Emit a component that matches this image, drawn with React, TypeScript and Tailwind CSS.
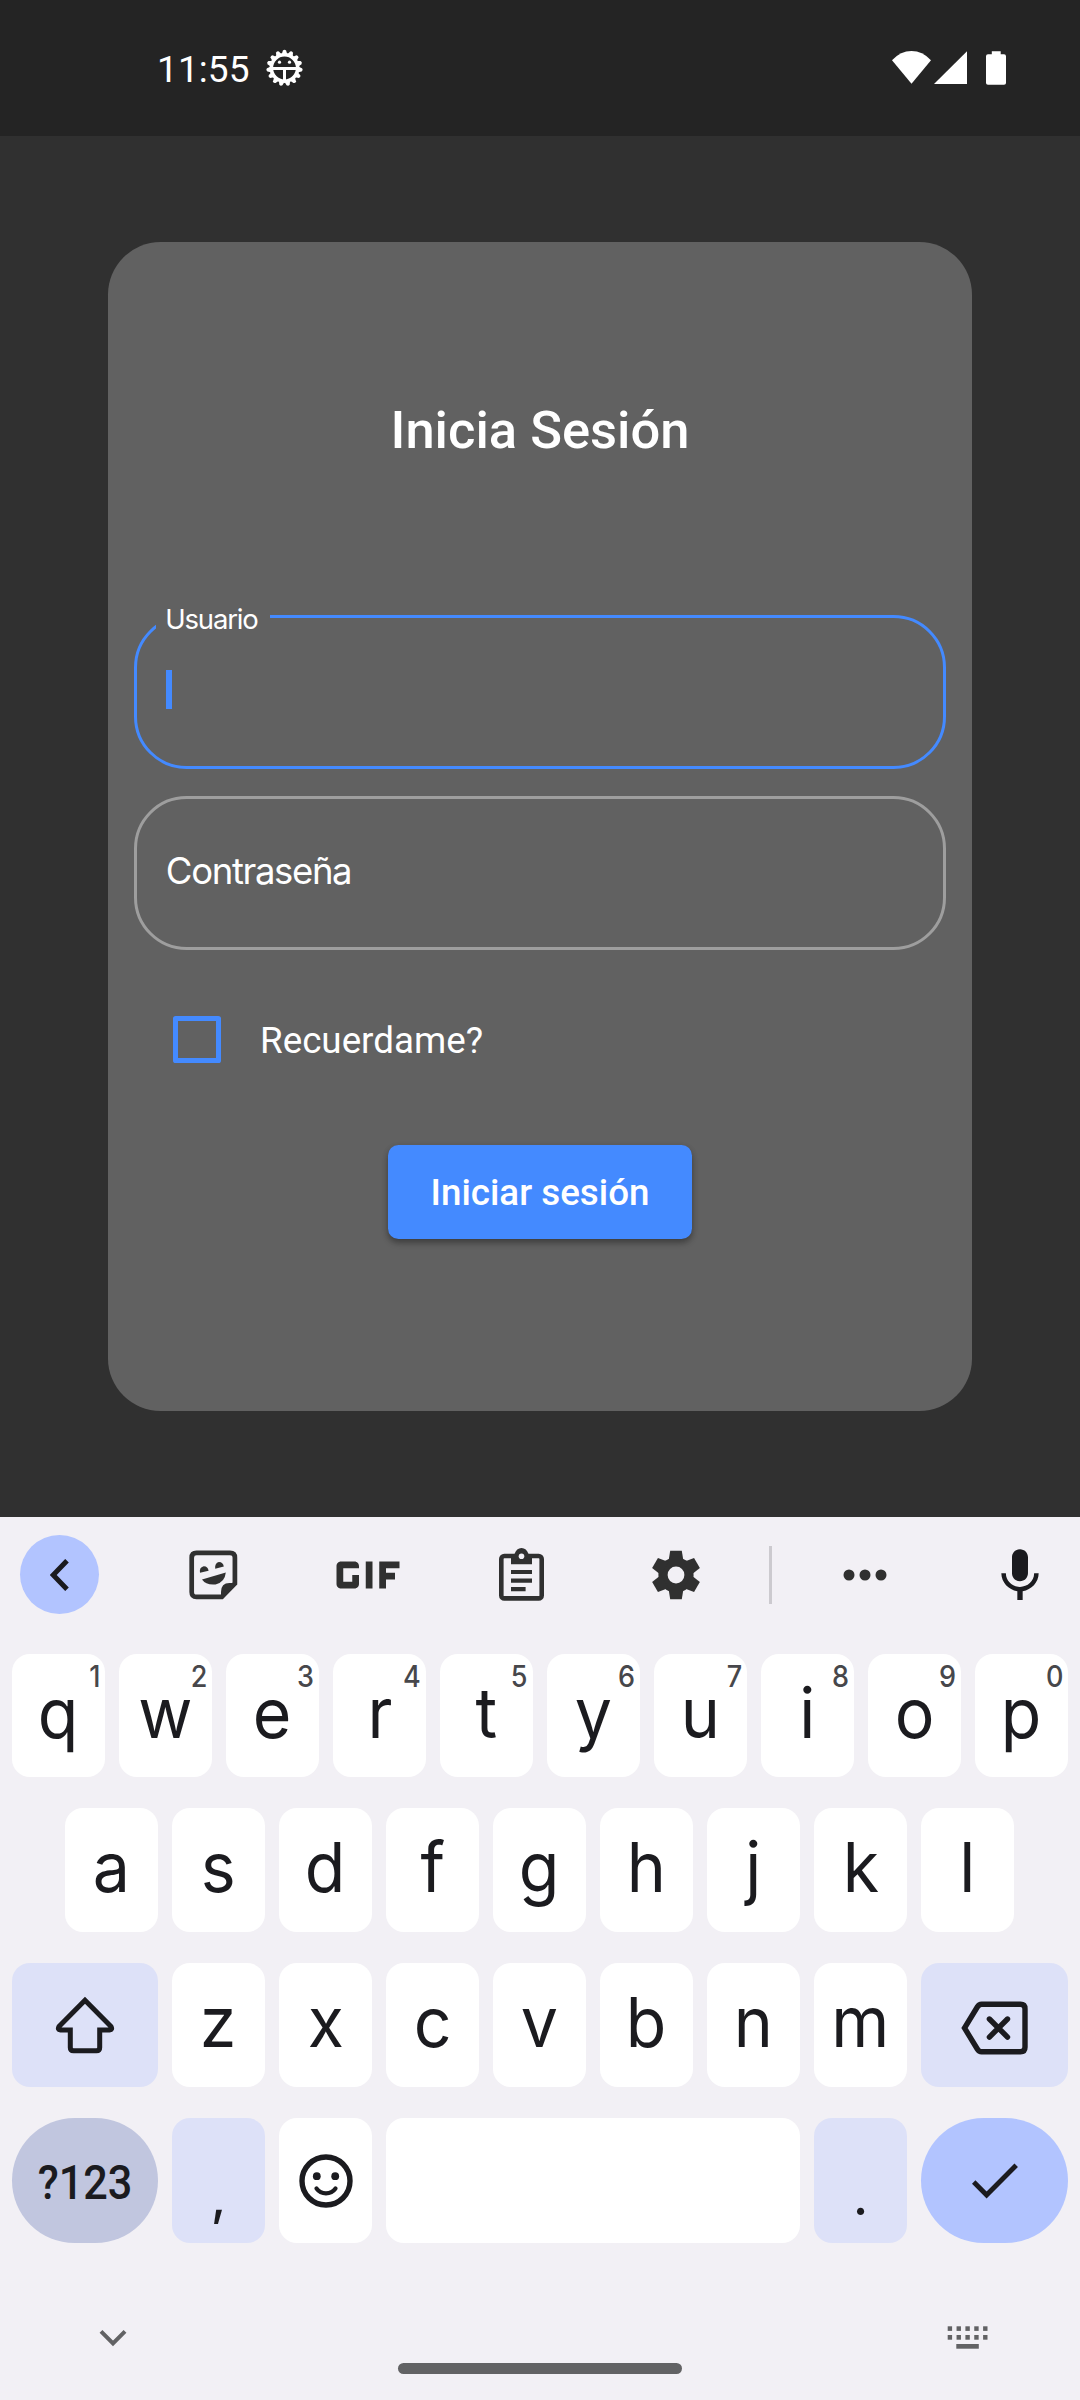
import type { ReactNode } from "react";
import { MdGif, MdMic } from "react-icons/md";

const INK = "#1b1b1f";
const TOOL = "#303030";

function StatusBar() {
  return (
    <header className="flex h-[136px] shrink-0 items-start bg-[#242424] text-white">
      <div className="mt-[46.5px] ml-[157px] w-[109px] text-[37px] leading-[46px] tracking-[0.1px]">11:55</div>
      <svg className="mt-[48.5px]" width="37" height="38" viewBox="-18.5 -19 37 38" fill="none">
        <circle r="13.2" stroke="#fff" strokeWidth="3.6" />
        {Array.from({ length: 15 }, (_, i) => (
          <path key={i} d="M-2.7 14L-1.6 17.4Q0 19 1.6 17.4L2.7 14Z" fill="#fff" transform={`rotate(${i * 24 + 12})`} />
        ))}
        <path d="M-13 0.5H13M0 0.5V13.5" stroke="#fff" strokeWidth="3" />
        <circle cx="-5" cy="-5.8" r="1.6" fill="#fff" />
        <circle cx="5" cy="-5.8" r="1.6" fill="#fff" />
      </svg>
      <svg className="mt-[51px] ml-[589px]" width="115" height="35" viewBox="0 0 115 35" fill="#fff">
        <path d="M0 9.3Q8.5 0 19.5 0T39 9.3L19.5 32.8Z" />
        <path d="M42 33L75 0.2V33Z" />
        <path d="M94 5.2q0-2 2-2h3.8V0.2h8.9V3.2h3.3q2 0 2 2V32q0 1.8-2 1.8H96q-2 0-2-1.8Z" />
      </svg>
    </header>
  );
}

function LoginCard() {
  return (
    <section className="mx-auto mt-[105.8px] flex h-[1169px] w-[864px] flex-col rounded-[52.5px] bg-[#616161] px-[26.25px] text-white">
      <h1 className="mt-[158px] text-center text-[52.5px] leading-[60px] font-medium">Inicia Sesión</h1>

      <div className="relative mt-[154.8px] h-[154.8px] shrink-0 rounded-[52.5px] border-[3px] border-[#448aff] pt-[52.6px] pl-[29px]">
        <label className="absolute -top-[5px] left-[19px] h-[20px] w-[113.5px] bg-[#616161] pl-[9px] font-['Inter'] text-[27.5px] leading-[12px] tracking-[-1.2px]">
          Usuario
        </label>
        <div className="h-[39px] w-[5.25px] bg-[#448aff]" />
      </div>

      <div className="mt-[26.2px] h-[154.8px] shrink-0 rounded-[52.5px] border-[3px] border-[#9e9e9e] pt-[49.6px] pl-[28.6px] font-['Inter'] text-[36.5px] leading-[46px] tracking-[-1.35px]">
        Contraseña
      </div>

      <div className="mt-[65.6px] ml-[39px] flex h-[47.25px] shrink-0 items-center">
        <div className="size-[47.25px] rounded-[2.6px] border-[5.25px] border-[#448aff]" />
        <span className="ml-[39.5px] pt-[2px] text-[36.75px] leading-[47px]">Recuerdame?</span>
      </div>

      <button className="mx-auto mt-[81.6px] h-[94px] w-[303.5px] shrink-0 rounded-[10.5px] bg-[#448aff] pt-[2px] text-[36.75px] leading-[92px] font-medium shadow-[0_4px_6px_rgba(0,0,0,0.3),0_2px_6px_rgba(0,0,0,0.1)]">
        Iniciar sesión
      </button>
    </section>
  );
}

function StickerIcon() {
  return (
    <svg width="49" height="50" viewBox="0 0 49 50" fill={TOOL}>
      <path
        d="M7.5 2.9H41Q45.9 2.9 45.9 7.7V33.5L32.8 46.9H7.5Q2.7 46.9 2.7 42V7.7Q2.7 2.9 7.5 2.9Z"
        fill="none"
        stroke={TOOL}
        strokeWidth="4.7"
      />
      <path d="M32 48V42Q32 33 40.5 33H48L33.5 49Z" />
      <path d="M11 22.8Q10 17.5 14.6 16.2Q18.8 16 19.6 20.8Z" />
      <path d="M26.2 18.8Q25.6 13.2 29.8 12Q34 11.9 34.8 16.6Z" />
      <path d="M13 29.5L36.8 22.5Q35.8 32.5 26.5 34.4Q17 35.3 13 29.5Z" />
    </svg>
  );
}

function ClipboardIcon() {
  return (
    <svg width="45" height="53" viewBox="0 0 45 53" fill={TOOL}>
      <rect x="2.3" y="8" width="40.4" height="42.4" rx="3" fill="none" stroke={TOOL} strokeWidth="4.6" />
      <path d="M12 6H15.5Q17.5 0 22.5 0T29.5 6H33V16.3H12Z" />
      <circle cx="22.5" cy="8.2" r="2.8" fill="#f2f0f5" />
      <path d="M12 22H33V26H12ZM12 30.6H33V34.7H12ZM12 39H26.6V43.2H12Z" />
    </svg>
  );
}

function GearIcon() {
  return (
    <svg width="50" height="50" viewBox="-25 -25 50 50" fill={TOOL}>
      <circle r="17.6" />
      {[0, 60, 120, 180, 240, 300].map((a) => (
        <path key={a} d="M-5.8 -24.2H5.8L7.6 -13H-7.6Z" transform={`rotate(${a})`} />
      ))}
      <circle r="8.4" fill="#f2f0f5" />
    </svg>
  );
}

function Toolbar() {
  return (
    <div className="flex h-[115px] shrink-0 items-center pl-[20px]">
      <div className="mr-[37.5px] flex size-[79px] shrink-0 items-center justify-center rounded-full bg-[#b2c4ff]">
        <svg width="19" height="32" viewBox="0 0 19 32" fill="none" stroke={INK} strokeWidth="5">
          <path d="M17 1.7L3.2 16L17 30.3" />
        </svg>
      </div>
      <div className="flex w-[154px] shrink-0 justify-center"><StickerIcon /></div>
      <div className="flex w-[154px] shrink-0 justify-center"><MdGif size={108} color={TOOL} /></div>
      <div className="flex w-[154px] shrink-0 justify-center"><ClipboardIcon /></div>
      <div className="flex w-[154px] shrink-0 justify-center"><GearIcon /></div>
      <div className="ml-[16.5px] h-[58px] w-[3px] shrink-0 bg-[#cccacf]" />
      <div className="ml-[16px] flex w-[154px] shrink-0 justify-center">
        <svg width="44" height="12" viewBox="0 0 44 12" fill={TOOL}>
          <circle cx="6" cy="6" r="5.5" />
          <circle cx="22" cy="6" r="5.5" />
          <circle cx="38" cy="6" r="5.5" />
        </svg>
      </div>
      <div className="ml-[23px] flex w-[110px] shrink-0 justify-center pt-[2px]"><MdMic size={64} color={INK} /></div>
    </div>
  );
}

function Key({ label, hint }: { label: string; hint?: string }) {
  return (
    <div className="relative flex h-full w-[93px] shrink-0 justify-center rounded-[18px] bg-white pt-[19px] text-[69px] leading-[80px] text-[#1b1b1f]">
      <span className="scale-x-[0.96]">{label}</span>
      {hint && (
        <span className="absolute top-[6px] right-[5px] origin-right scale-x-[0.9] text-[30px] leading-[32px] font-medium text-[#47474b]">{hint}</span>
      )}
    </div>
  );
}

function SpecialKey({ className, children }: { className: string; children?: ReactNode }) {
  return <div className={`flex h-full shrink-0 items-center justify-center ${className}`}>{children}</div>;
}

function Keyboard() {
  return (
    <section className="flex h-[883px] shrink-0 flex-col bg-[#f2f0f5] font-['Inter']">
      <Toolbar />
      <div className="mt-[22px] flex h-[123px] gap-[14px] pl-[12px]">
        {"qwertyuiop".split("").map((c, i) => (
          <Key key={c} label={c} hint={String((i + 1) % 10)} />
        ))}
      </div>
      <div className="mt-[31px] flex h-[124px] gap-[14px] pl-[65px]">
        {"asdfghjkl".split("").map((c) => (
          <Key key={c} label={c} />
        ))}
      </div>
      <div className="mt-[31px] flex h-[124px] gap-[14px] pl-[12px]">
        <SpecialKey className="w-[146px] rounded-[18px] bg-[#dde1f8]">
          <svg width="60" height="58" viewBox="0 0 60 58" fill="none" stroke={INK} strokeWidth="5" strokeLinejoin="miter">
            <path d="M30 4.300L4 30.500Q2.200 33.700 5.500 34H15.300V51.500Q15.300 54.800 18.500 54.800H41.500Q44.700 54.800 44.700 51.500V34H54.500Q57.800 33.700 56 30.500Z" />
          </svg>
        </SpecialKey>
        {"zxcvbnm".split("").map((c) => (
          <Key key={c} label={c} />
        ))}
        <SpecialKey className="w-[147px] rounded-[18px] bg-[#dde1f8]">
          <svg className="mt-[5px]" width="67" height="54" viewBox="0 0 67 54" fill="none" stroke={INK} strokeWidth="5.4" strokeLinecap="round">
            <path d="M20.5 3.2H59.5Q64 3.2 64 7.7V46.3Q64 50.8 59.5 50.8H20.5Q18 50.8 16.3 48L3.5 27L16.3 6Q18 3.2 20.5 3.2Z" />
            <path d="M28.4 18L46.5 36.1M46.5 18L28.4 36.1" />
          </svg>
        </SpecialKey>
      </div>
      <div className="mt-[31px] flex h-[125px] gap-[14px] pl-[12px]">
        <SpecialKey className="w-[146px] rounded-full bg-[#c1c6df] pt-[6px] font-['Roboto'] text-[47.5px] font-medium text-[#1b1b1f]">
          <span className="scale-x-[0.91]">?123</span>
        </SpecialKey>
        <SpecialKey className="w-[93px] rounded-[18px] bg-[#dde1f8] pt-[34px] text-[50px] font-medium text-[#1b1b1f]">,</SpecialKey>
        <SpecialKey className="w-[93px] rounded-[18px] bg-white">
          <svg width="54" height="54" viewBox="-27 -27 54 54" fill="none" stroke={INK}>
            <circle r="24" strokeWidth="5.4" />
            <circle cx="-9.2" cy="-4.8" r="3.9" fill={INK} stroke="none" />
            <circle cx="9.2" cy="-4.8" r="3.9" fill={INK} stroke="none" />
            <path d="M-9.5 7.5Q-6 12.3 0 12.3T9.5 7.5" strokeWidth="4.2" strokeLinecap="round" />
          </svg>
        </SpecialKey>
        <SpecialKey className="w-[414px] rounded-[18px] bg-white" />
        <SpecialKey className="w-[93px] rounded-[18px] bg-[#dde1f8] pt-[33px] text-[50px] font-medium text-[#1b1b1f]">.</SpecialKey>
        <SpecialKey className="w-[147px] rounded-full bg-[#b2c4ff]">
          <svg width="46" height="36" viewBox="0 0 46 36" fill="none" stroke={INK} strokeWidth="4.9">
            <path d="M1.7 19L14.6 32L44.2 2.3" />
          </svg>
        </SpecialKey>
      </div>
      <div className="mt-[82px] flex h-[25px] items-start justify-between pr-[90px] pl-[99px]">
        <svg className="mt-[4px]" width="28" height="18" viewBox="0 0 28 18" fill="none" stroke="#626264" strokeWidth="4">
          <path d="M2 2.4L14 14.4L26 2.4" />
        </svg>
        <svg className="mt-[1px]" width="43" height="23" viewBox="0 0 43 23" fill="#626264">
          {[0, 1, 2, 3, 4].flatMap((i) => [
            <rect key={`a${i}`} x={0.7 + i * 8.85} y="0.3" width="4.4" height="4.6" />,
            <rect key={`b${i}`} x={0.7 + i * 8.85} y="9" width="4.4" height="4.7" />,
          ])}
          <rect x="9.3" y="18" width="22.5" height="4.7" />
        </svg>
      </div>
      <div className="mx-auto mt-[13px] h-[11px] w-[284px] rounded-full bg-[#626264]" />
    </section>
  );
}

export default function App() {
  return (
    <main className="flex h-[2400px] w-[1080px] flex-col overflow-hidden bg-[#303030] font-['Roboto',sans-serif]">
      <StatusBar />
      <div className="flex h-[1381px] shrink-0 flex-col">
        <LoginCard />
      </div>
      <Keyboard />
    </main>
  );
}
